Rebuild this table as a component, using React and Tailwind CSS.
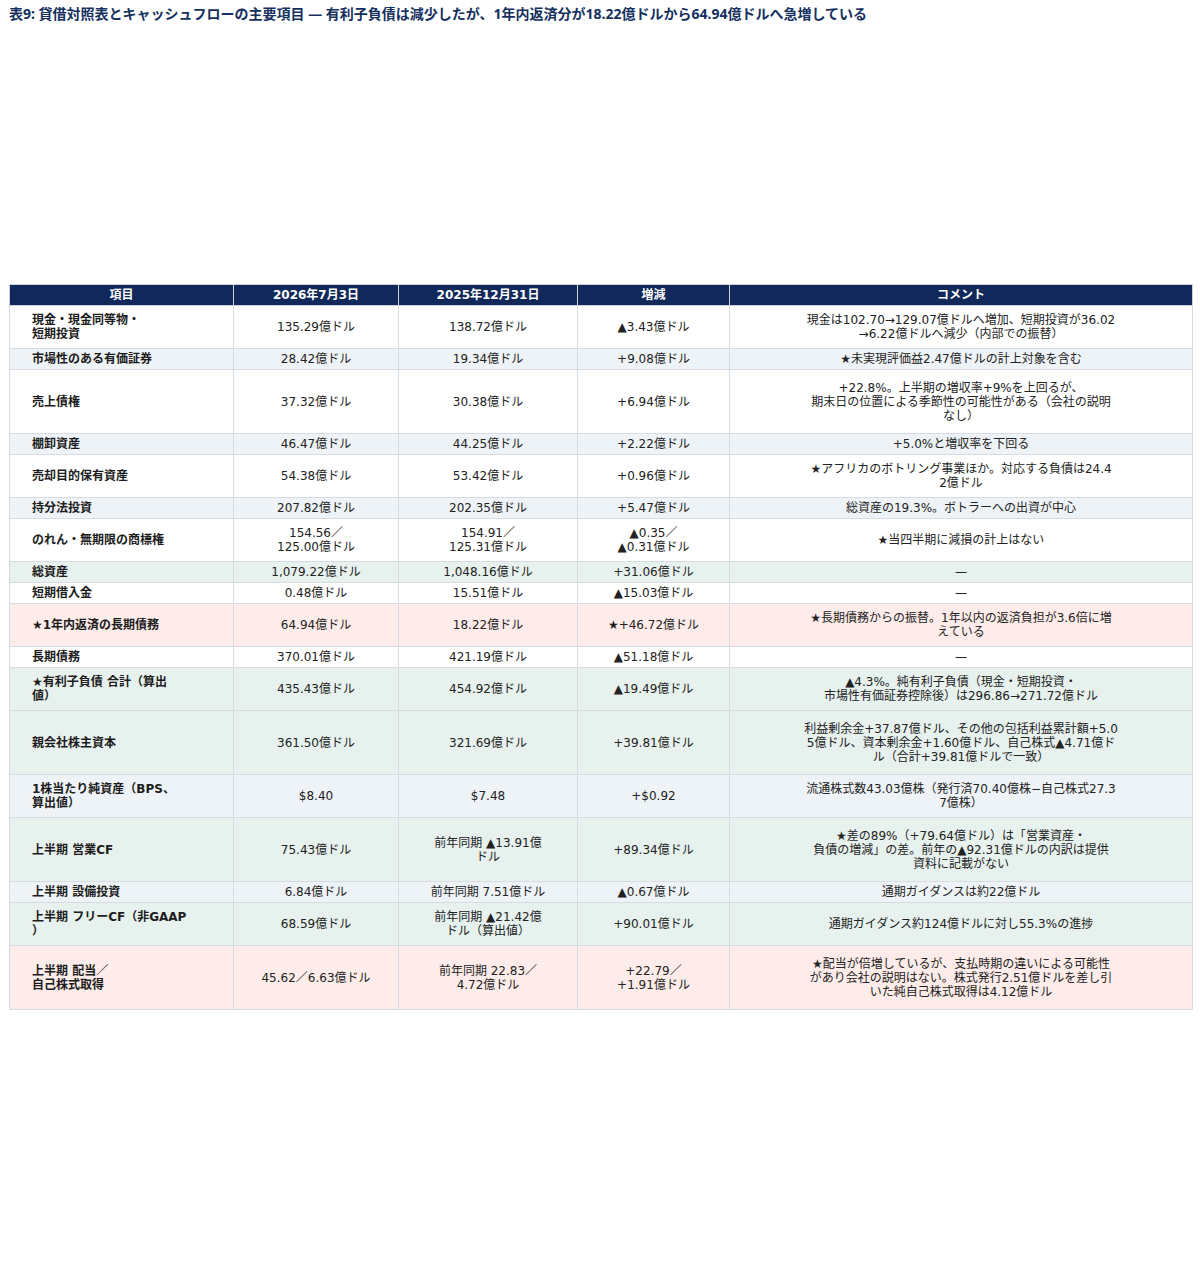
import React from "react";

const BLUE = "bg-[#eef3f7]";
const GREEN = "bg-[#e7f1ee]";
const PINK = "bg-[#fdece9]";
const WHITE = "bg-white";

const rows = [
  { h: "h-[43px]", bg: WHITE, label: ["現金・現金同等物・", "短期投資"], a: ["135.29億ドル"], b: ["138.72億ドル"], d: ["▲3.43億ドル"], c: ["現金は102.70→129.07億ドルへ増加、短期投資が36.02", "→6.22億ドルへ減少（内部での振替）"] },
  { h: "h-[21px]", bg: BLUE, label: ["市場性のある有価証券"], a: ["28.42億ドル"], b: ["19.34億ドル"], d: ["+9.08億ドル"], c: ["★未実現評価益2.47億ドルの計上対象を含む"] },
  { h: "h-[64px]", bg: WHITE, label: ["売上債権"], a: ["37.32億ドル"], b: ["30.38億ドル"], d: ["+6.94億ドル"], c: ["+22.8%。上半期の増収率+9%を上回るが、", "期末日の位置による季節性の可能性がある（会社の説明", "なし）"] },
  { h: "h-[21px]", bg: BLUE, label: ["棚卸資産"], a: ["46.47億ドル"], b: ["44.25億ドル"], d: ["+2.22億ドル"], c: ["+5.0%と増収率を下回る"] },
  { h: "h-[43px]", bg: WHITE, label: ["売却目的保有資産"], a: ["54.38億ドル"], b: ["53.42億ドル"], d: ["+0.96億ドル"], c: ["★アフリカのボトリング事業ほか。対応する負債は24.4", "2億ドル"] },
  { h: "h-[21px]", bg: BLUE, label: ["持分法投資"], a: ["207.82億ドル"], b: ["202.35億ドル"], d: ["+5.47億ドル"], c: ["総資産の19.3%。ボトラーへの出資が中心"] },
  { h: "h-[43px]", bg: WHITE, label: ["のれん・無期限の商標権"], a: ["154.56／", "125.00億ドル"], b: ["154.91／", "125.31億ドル"], d: ["▲0.35／", "▲0.31億ドル"], c: ["★当四半期に減損の計上はない"] },
  { h: "h-[21px]", bg: GREEN, label: ["総資産"], a: ["1,079.22億ドル"], b: ["1,048.16億ドル"], d: ["+31.06億ドル"], c: ["—"] },
  { h: "h-[21px]", bg: WHITE, label: ["短期借入金"], a: ["0.48億ドル"], b: ["15.51億ドル"], d: ["▲15.03億ドル"], c: ["—"] },
  { h: "h-[43px]", bg: PINK, label: ["★1年内返済の長期債務"], a: ["64.94億ドル"], b: ["18.22億ドル"], d: ["★+46.72億ドル"], c: ["★長期債務からの振替。1年以内の返済負担が3.6倍に増", "えている"] },
  { h: "h-[21px]", bg: WHITE, label: ["長期債務"], a: ["370.01億ドル"], b: ["421.19億ドル"], d: ["▲51.18億ドル"], c: ["—"] },
  { h: "h-[43px]", bg: GREEN, label: ["★有利子負債 合計（算出", "値）"], a: ["435.43億ドル"], b: ["454.92億ドル"], d: ["▲19.49億ドル"], c: ["▲4.3%。純有利子負債（現金・短期投資・", "市場性有価証券控除後）は296.86→271.72億ドル"] },
  { h: "h-[64px]", bg: GREEN, label: ["親会社株主資本"], a: ["361.50億ドル"], b: ["321.69億ドル"], d: ["+39.81億ドル"], c: ["利益剰余金+37.87億ドル、その他の包括利益累計額+5.0", "5億ドル、資本剰余金+1.60億ドル、自己株式▲4.71億ド", "ル（合計+39.81億ドルで一致）"] },
  { h: "h-[43px]", bg: BLUE, label: ["1株当たり純資産（BPS、", "算出値）"], a: ["$8.40"], b: ["$7.48"], d: ["+$0.92"], c: ["流通株式数43.03億株（発行済70.40億株−自己株式27.3", "7億株）"] },
  { h: "h-[64px]", bg: GREEN, label: ["上半期 営業CF"], a: ["75.43億ドル"], b: ["前年同期 ▲13.91億", "ドル"], d: ["+89.34億ドル"], c: ["★差の89%（+79.64億ドル）は「営業資産・", "負債の増減」の差。前年の▲92.31億ドルの内訳は提供", "資料に記載がない"] },
  { h: "h-[21px]", bg: BLUE, label: ["上半期 設備投資"], a: ["6.84億ドル"], b: ["前年同期 7.51億ドル"], d: ["▲0.67億ドル"], c: ["通期ガイダンスは約22億ドル"] },
  { h: "h-[43px]", bg: GREEN, label: ["上半期 フリーCF（非GAAP", "）"], a: ["68.59億ドル"], b: ["前年同期 ▲21.42億", "ドル（算出値）"], d: ["+90.01億ドル"], c: ["通期ガイダンス約124億ドルに対し55.3%の進捗"] },
  { h: "h-[64px]", bg: PINK, label: ["上半期 配当／", "自己株式取得"], a: ["45.62／6.63億ドル"], b: ["前年同期 22.83／", "4.72億ドル"], d: ["+22.79／", "+1.91億ドル"], c: ["★配当が倍増しているが、支払時期の違いによる可能性", "があり会社の説明はない。株式発行2.51億ドルを差し引", "いた純自己株式取得は4.12億ドル"] },
];

const Lines = ({ lines }) =>
  lines.map((l, i) => (
    <React.Fragment key={i}>
      {i > 0 && <br />}
      {l}
    </React.Fragment>
  ));

const App = () => {
  return (
    <div className="bg-white w-[1200px] h-[1269px] px-[9px] pt-[5px]">
      <h1
        className="text-[14px] leading-[18px] font-bold text-[#15305e] whitespace-nowrap"
        style={{ fontFamily: '"Noto Sans", "Noto Sans CJK JP", sans-serif' }}
      >
        表9: 貸借対照表とキャッシュフローの主要項目 — 有利子負債は減少したが、1年内返済分が18.22億ドルから64.94億ドルへ急増している
      </h1>
      <table
        className="mt-[261px] w-[1183px] table-fixed border-collapse text-[12px] leading-[14px] text-[#222]"
        style={{ fontFamily: '"DejaVu Sans", "Noto Sans CJK JP", sans-serif' }}
      >
        <colgroup>
          <col className="w-[224px]" />
          <col className="w-[165px]" />
          <col className="w-[179px]" />
          <col className="w-[152px]" />
          <col className="w-[463px]" />
        </colgroup>
        <thead>
          <tr className="h-[21px] bg-[#11295a] text-white font-bold">
            {["項目", "2026年7月3日", "2025年12月31日", "増減", "コメント"].map((t) => (
              <th key={t} className="border border-[#c9d2dd] p-0 text-center font-bold">
                {t}
              </th>
            ))}
          </tr>
        </thead>
        <tbody>
          {rows.map((r, i) => (
            <tr key={i} className={`${r.h} ${r.bg}`}>
              <td className="border border-[#d6dce2] pl-[22px] pr-1 py-0 font-bold text-[#1c1c1c] whitespace-nowrap">
                <Lines lines={r.label} />
              </td>
              <td className="border border-[#d6dce2] p-0 text-center whitespace-nowrap">
                <Lines lines={r.a} />
              </td>
              <td className="border border-[#d6dce2] p-0 text-center whitespace-nowrap">
                <Lines lines={r.b} />
              </td>
              <td className="border border-[#d6dce2] p-0 text-center whitespace-nowrap">
                <Lines lines={r.d} />
              </td>
              <td className="border border-[#d6dce2] p-0 text-center whitespace-nowrap">
                <Lines lines={r.c} />
              </td>
            </tr>
          ))}
        </tbody>
      </table>
    </div>
  );
};

export default App;
